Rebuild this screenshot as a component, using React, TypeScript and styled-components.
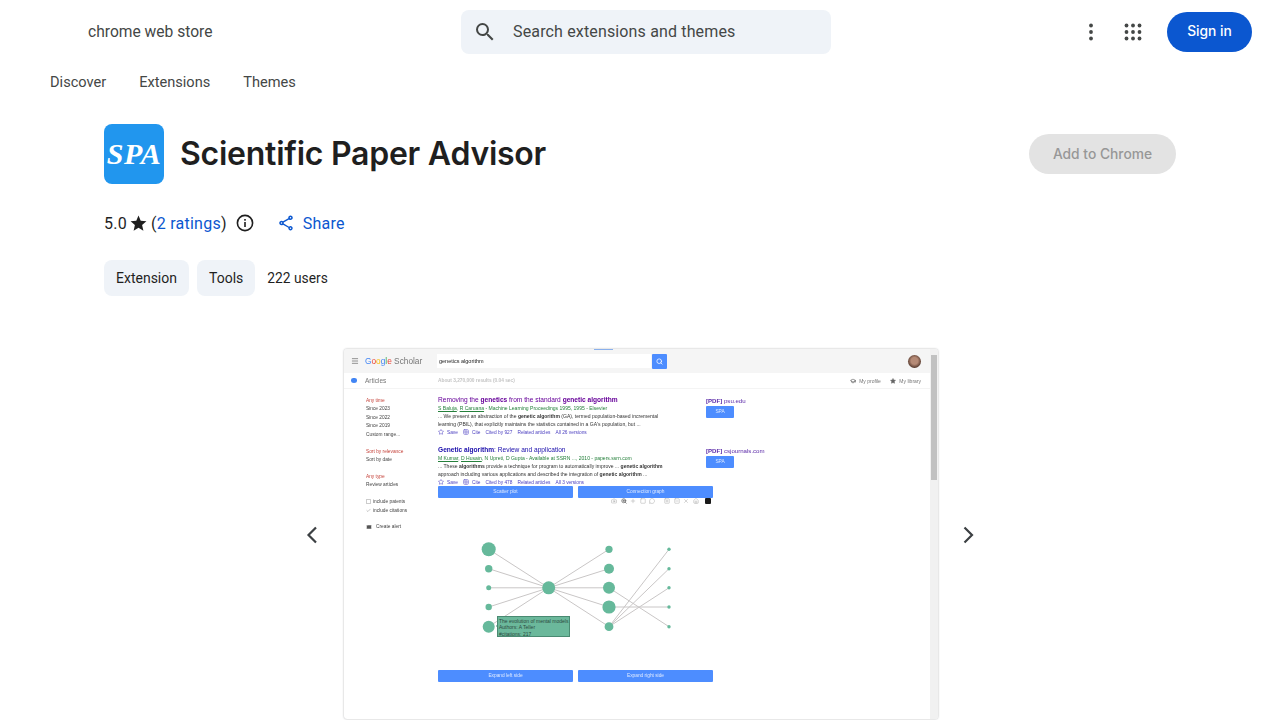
import styled, { createGlobalStyle } from 'styled-components';
import { Camera, ZoomIn, Plus, Square, MessageCircle, SquarePlus, SquareMinus, X, House, Menu, Search, GraduationCap, Star, Mail, Check, Grid2x2 } from 'lucide-react';

const GlobalStyle = createGlobalStyle`
    html, body {
        margin: 0;
        height: 720px;
        overflow: hidden;
        background: #fff;
        font-family: Roboto, "Liberation Sans", sans-serif;
        color: #1f1f1f;
    }
`;

const leftNodes = [
    { y: 549.3, r: 7 },
    { y: 568.7, r: 3.7 },
    { y: 587.8, r: 2.5 },
    { y: 607, r: 3.2 },
    { y: 626.7, r: 6 },
];

const middleNodes = [
    { y: 549.3, r: 3.6 },
    { y: 568.7, r: 5 },
    { y: 587.8, r: 6 },
    { y: 607, r: 6.6 },
    { y: 626.7, r: 4.4 },
];

const rightY = [549.3, 568.7, 587.8, 607, 626.7];

const rightEdges = [
    [4, 0],
    [4, 1],
    [4, 2],
    [3, 3],
    [2, 4],
];

// the graph is drawn in page coordinates, shifted to the top left of its box
const GRAPH_X = 438;
const GRAPH_Y = 525;

const ConnectionGraph = () => (
    <GraphBox>
        <svg width="275" height="145" viewBox={`${GRAPH_X} ${GRAPH_Y} 275 145`}>
            <g stroke="#c9c6c6" strokeWidth="1">
                {leftNodes.map((n) => <line key={n.y} x1="488.7" y1={n.y} x2="548.7" y2="587.8" />)}
                {middleNodes.map((n) => <line key={n.y} x1="548.7" y1="587.8" x2="609" y2={n.y} />)}
                {rightEdges.map(([from, to]) => (
                    <line key={to} x1="609" y1={middleNodes[from].y} x2="669" y2={rightY[to]} />
                ))}
            </g>
            <g fill="#66b99b">
                {leftNodes.map((n) => <circle key={n.y} cx="488.7" cy={n.y} r={n.r} />)}
                <circle cx="548.7" cy="587.8" r="6.5" />
                {middleNodes.map((n) => <circle key={n.y} cx="609" cy={n.y} r={n.r} />)}
                {rightY.map((y) => <circle key={y} cx="669" cy={y} r="1.7" />)}
            </g>
        </svg>
        <GraphTooltip>
            <div>The evolution of mental models</div>
            <div>Authors: A Teller</div>
            <div>#citations: 217</div>
        </GraphTooltip>
    </GraphBox>
);

const Actions = ({ citedBy, versions }: { citedBy: string, versions: string }) => (
    <ResultActions>
        <ActionItem><Star size={6} />Save</ActionItem>
        <ActionItem><Grid2x2 size={6} />Cite</ActionItem>
        <ActionItem>Cited by {citedBy}</ActionItem>
        <ActionItem>Related articles</ActionItem>
        <ActionItem>All {versions} versions</ActionItem>
    </ResultActions>
);

const ScholarShot = () => (
    <Shot>
        <ShotTab />
        <ShotMain>
            <ShotTopBar>
                <Menu size={8} color="#777" strokeWidth={2.4} />
                <ScholarLogo>
                    <b style={{ color: '#4285f4' }}>G</b>
                    <b style={{ color: '#ea4335' }}>o</b>
                    <b style={{ color: '#fbbc05' }}>o</b>
                    <b style={{ color: '#4285f4' }}>g</b>
                    <b style={{ color: '#34a853' }}>l</b>
                    <b style={{ color: '#ea4335' }}>e</b>
                    <span> Scholar</span>
                </ScholarLogo>
                <ShotSearch>genetics algorithm</ShotSearch>
                <ShotSearchButton><Search size={7} color="#fff" strokeWidth={2.6} /></ShotSearchButton>
                <Avatar />
            </ShotTopBar>
            <ShotSubBar>
                <ArticlesLabel>
                    <ArticlesDot />
                    Articles
                </ArticlesLabel>
                <ResultCount>About 3,270,000 results (0.04 sec)</ResultCount>
                <ProfileLinks>
                    <span><GraduationCap size={6} strokeWidth={3} /> My profile</span>
                    <span><Star size={6} fill="#666" /> My library</span>
                </ProfileLinks>
            </ShotSubBar>
            <ShotBody>
                <ShotSidebar>
                    <FilterGroup>
                        <FilterItem $active>Any time</FilterItem>
                        <FilterItem>Since 2023</FilterItem>
                        <FilterItem>Since 2022</FilterItem>
                        <FilterItem>Since 2019</FilterItem>
                        <FilterItem>Custom range...</FilterItem>
                    </FilterGroup>
                    <FilterGroup>
                        <FilterItem $active>Sort by relevance</FilterItem>
                        <FilterItem>Sort by date</FilterItem>
                    </FilterGroup>
                    <FilterGroup>
                        <FilterItem $active>Any type</FilterItem>
                        <FilterItem>Review articles</FilterItem>
                    </FilterGroup>
                    <FilterGroup>
                        <FilterItem><CheckBox />include patents</FilterItem>
                        <FilterItem><CheckBox $checked><Check size={5} color="#777" /></CheckBox>include citations</FilterItem>
                    </FilterGroup>
                    <AlertItem><Mail size={6} fill="#555" color="#fff" />Create alert</AlertItem>
                </ShotSidebar>
                <ShotResults>
                    <Result>
                        <div>
                            <ResultTitle $visited>Removing the <b>genetics</b> from the standard <b>genetic algorithm</b></ResultTitle>
                            <ResultAuthors><u>S Baluja</u>, <u>R Caruana</u> - Machine Learning Proceedings 1995, 1995 - Elsevier</ResultAuthors>
                            <ResultSnippet>... We present an abstraction of the <b>genetic algorithm</b> (GA), termed population-based incremental</ResultSnippet>
                            <ResultSnippet>learning (PBIL), that explicitly maintains the statistics contained in a GA's population, but ...</ResultSnippet>
                            <Actions citedBy="927" versions="26" />
                        </div>
                        <ResultSide>
                            <PdfLink><b>[PDF]</b> psu.edu</PdfLink>
                            <SpaButton>SPA</SpaButton>
                        </ResultSide>
                    </Result>
                    <Result>
                        <div>
                            <ResultTitle><b>Genetic algorithm</b>: Review and application</ResultTitle>
                            <ResultAuthors><u>M Kumar</u>, <u>D Husain</u>, N Upreti, D Gupta - Available at SSRN ..., 2010 - papers.ssrn.com</ResultAuthors>
                            <ResultSnippet>... These <b>algorithms</b> provide a technique for program to automatically improve ... <b>genetic algorithm</b></ResultSnippet>
                            <ResultSnippet>approach including various applications and described the integration of <b>genetic algorithm</b> ...</ResultSnippet>
                            <Actions citedBy="478" versions="3" />
                        </div>
                        <ResultSide>
                            <PdfLink><b>[PDF]</b> csjournals.com</PdfLink>
                            <SpaButton>SPA</SpaButton>
                        </ResultSide>
                    </Result>
                    <WideButtons>
                        <WideButton>Scatter plot</WideButton>
                        <WideButton>Connection graph</WideButton>
                    </WideButtons>
                    <PlotToolbar>
                        <Camera size={6} />
                        <ZoomIn size={6} color="#666" strokeWidth={3} />
                        <Plus size={6} />
                        <Square size={6} />
                        <MessageCircle size={6} />
                        <ToolGap />
                        <SquarePlus size={6} />
                        <SquareMinus size={6} />
                        <X size={6} />
                        <House size={6} />
                        <PlotBadge />
                    </PlotToolbar>
                    <ConnectionGraph />
                    <WideButtons>
                        <WideButton>Expand left side</WideButton>
                        <WideButton>Expand right side</WideButton>
                    </WideButtons>
                </ShotResults>
            </ShotBody>
        </ShotMain>
        <ScrollTrack>
            <ScrollThumb />
        </ScrollTrack>
    </Shot>
);

const App = () => (
    <>
        <GlobalStyle />
        <Header>
            <StoreName>chrome web store</StoreName>
            <SearchBox>
                <svg width="24" height="24" viewBox="0 0 24 24" fill="#444746">
                    <path d="M15.5 14h-.79l-.28-.27A6.471 6.471 0 0 0 16 9.5 6.5 6.5 0 1 0 9.5 16c1.61 0 3.09-.59 4.23-1.57l.27.28v.79l5 4.99L20.49 19l-4.99-5zm-6 0C7.01 14 5 11.99 5 9.5S7.01 5 9.5 5 14 7.01 14 9.5 11.99 14 9.5 14z" />
                </svg>
                <SearchText>Search extensions and themes</SearchText>
            </SearchBox>
            <HeaderActions>
                <IconSlot>
                    <svg width="24" height="24" viewBox="0 0 24 24" fill="#444746">
                        <circle cx="12" cy="5.5" r="1.9" />
                        <circle cx="12" cy="12" r="1.9" />
                        <circle cx="12" cy="18.5" r="1.9" />
                    </svg>
                </IconSlot>
                <IconSlot>
                    <svg width="24" height="24" viewBox="0 0 24 24" fill="#444746">
                        {[5.5, 12, 18.5].map((y) => [5.5, 12, 18.5].map((x) => <circle key={`${x}-${y}`} cx={x} cy={y} r="1.9" />))}
                    </svg>
                </IconSlot>
                <SignIn>Sign in</SignIn>
            </HeaderActions>
        </Header>
        <Nav>
            <NavItem>Discover</NavItem>
            <NavItem>Extensions</NavItem>
            <NavItem>Themes</NavItem>
        </Nav>
        <Content>
            <TitleRow>
                <AppIcon>SPA</AppIcon>
                <Title>Scientific Paper Advisor</Title>
                <AddButton>Add to Chrome</AddButton>
            </TitleRow>
            <RatingRow>
                <span>5.0</span>
                <svg width="19" height="19" viewBox="0 0 24 24" fill="#1f1f1f">
                    <path d="M12 17.27L18.18 21l-1.64-6.97L22 9.24l-7.19-.61L12 2 9.19 8.63 2 9.24l5.46 4.73L5.82 21z" />
                </svg>
                <span>(<RatingLink>2 ratings</RatingLink>)</span>
                <InfoIcon width="20" height="20" viewBox="0 0 20 20">
                    <circle cx="10" cy="10" r="7.6" fill="none" stroke="#1f1f1f" strokeWidth="1.6" />
                    <rect x="9.2" y="9" width="1.6" height="5" fill="#1f1f1f" />
                    <rect x="9.2" y="6" width="1.6" height="1.7" fill="#1f1f1f" />
                </InfoIcon>
                <ShareLink>
                    <svg width="18" height="18" viewBox="0 0 24 24" fill="#0b57d0">
                        <path d="M18 16.08c-.76 0-1.44.3-1.96.77L8.91 12.7c.05-.23.09-.46.09-.7s-.04-.47-.09-.7l7.05-4.11c.54.5 1.25.81 2.04.81 1.66 0 3-1.34 3-3s-1.34-3-3-3-3 1.34-3 3c0 .24.04.47.09.7L8.04 9.81C7.5 9.31 6.79 9 6 9c-1.66 0-3 1.34-3 3s1.34 3 3 3c.79 0 1.5-.31 2.04-.81l7.12 4.16c-.05.21-.08.43-.08.65 0 1.61 1.31 2.92 2.92 2.92s2.92-1.31 2.92-2.92-1.31-2.92-2.92-2.92zM18 4c.55 0 1 .45 1 1s-.45 1-1 1-1-.45-1-1 .45-1 1-1zM6 13c-.55 0-1-.45-1-1s.45-1 1-1 1 .45 1 1-.45 1-1 1zm12 7.02c-.55 0-1-.45-1-1s.45-1 1-1 1 .45 1 1-.45 1-1 1z" />
                    </svg>
                    Share
                </ShareLink>
            </RatingRow>
            <ChipRow>
                <Chip>Extension</Chip>
                <Chip>Tools</Chip>
                <Users>222 users</Users>
            </ChipRow>
            <Carousel>
                <ArrowButton>
                    <svg width="24" height="24" viewBox="0 0 24 24" fill="none" stroke="#3c4043" strokeWidth="2.2">
                        <path d="M16 4.5 8.5 12l7.5 7.5" />
                    </svg>
                </ArrowButton>
                <ScholarShot />
                <ArrowButton>
                    <svg width="24" height="24" viewBox="0 0 24 24" fill="none" stroke="#3c4043" strokeWidth="2.2">
                        <path d="M8.5 4.5 16 12l-7.5 7.5" />
                    </svg>
                </ArrowButton>
            </Carousel>
        </Content>
    </>
);

export default App;

const Header = styled.header`
    display: grid;
    grid-template-columns: 373px 370px 1fr;
    align-items: center;
    height: 64px;
    padding: 0 28px 0 88px;
`

const StoreName = styled.div`
    font-size: 15.6px;
    color: #444746;
`

const SearchBox = styled.div`
    display: flex;
    align-items: center;
    gap: 16px;
    height: 44px;
    padding-left: 12px;
    border-radius: 8px;
    background: #eff3f8;
`

const SearchText = styled.span`
    margin-top: -2px;
    font-size: 16px;
    letter-spacing: 0.15px;
    color: #444746;
`

const HeaderActions = styled.div`
    display: flex;
    align-items: center;
    justify-content: flex-end;
    gap: 18px;
    margin-top: -1px;
`

const IconSlot = styled.div`
    display: flex;
    width: 24px;
    height: 24px;
    &:last-of-type {
        margin-right: 4px;
    }
`

const SignIn = styled.button`
    width: 85px;
    height: 40px;
    padding-bottom: 2px;
    border: 0;
    border-radius: 20px;
    background: #0b57d0;
    color: #fff;
    font: 500 13.8px Inter, Roboto, sans-serif;
`

const Nav = styled.nav`
    display: flex;
    align-items: center;
    gap: 33px;
    height: 36px;
    padding-left: 50px;
`

const NavItem = styled.a`
    font-size: 14.6px;
    color: #444746;
`

const Content = styled.main`
    padding: 24px 104px 0;
`

const TitleRow = styled.div`
    display: flex;
    align-items: center;
    height: 60px;
`

const AppIcon = styled.div`
    display: flex;
    align-items: center;
    justify-content: center;
    width: 60px;
    height: 60px;
    flex: none;
    border-radius: 8px;
    background: #2196ee;
    color: #fff;
    font: italic bold 30px "Liberation Serif", serif;
    letter-spacing: 0.5px;
`

const Title = styled.h1`
    flex: 1;
    margin: -1px 0 0 16px;
    font: 600 32px Inter, Roboto, sans-serif;
    letter-spacing: -0.25px;
    color: #1f1f1f;
`

const AddButton = styled.button`
    width: 147px;
    height: 40px;
    padding-bottom: 1px;
    border: 0;
    border-radius: 20px;
    background: #e3e3e3;
    color: #979797;
    font: 500 13.8px Inter, Roboto, sans-serif;
`

const RatingRow = styled.div`
    display: flex;
    align-items: center;
    height: 24px;
    margin-top: 27px;
    font-size: 16px;
    letter-spacing: 0.25px;
    color: #1f1f1f;

    & > svg:first-of-type {
        margin: 0 3px 0 2px;
    }
`

const RatingLink = styled.a`
    color: #0b57d0;
`

const InfoIcon = styled.svg`
    margin-left: 8px;
`

const ShareLink = styled.a`
    display: flex;
    align-items: center;
    gap: 8px;
    margin-left: 22px;
    color: #0b57d0;
`

const ChipRow = styled.div`
    display: flex;
    align-items: center;
    gap: 8px;
    margin-top: 25px;
`

const Chip = styled.span`
    display: flex;
    align-items: center;
    height: 36px;
    padding: 0 12px;
    border-radius: 8px;
    background: #eff3f8;
    font-size: 14px;
    color: #1f1f1f;
`

const Users = styled.span`
    margin-left: 4px;
    font-size: 13.8px;
    color: #1f1f1f;
`

const Carousel = styled.div`
    display: flex;
    align-items: center;
    justify-content: center;
    gap: 19px;
    margin-top: 53px;
`

const ArrowButton = styled.div`
    display: flex;
    width: 24px;
    height: 24px;
    flex: none;
    margin-top: 1px;
`

const Shot = styled.div`
    position: relative;
    display: flex;
    width: 594px;
    height: 370px;
    flex: none;
    margin: 0 -1px 0 1px;
    overflow: hidden;
    border-radius: 3px;
    background: #fff;
    box-shadow: 0 0 2px rgba(60, 64, 67, 0.45);
    font-family: "Liberation Sans", Arial, sans-serif;
    filter: blur(0.35px);
`

const ShotTab = styled.div`
    position: absolute;
    top: 0;
    left: 250px;
    width: 19px;
    height: 1px;
    background: #8ab0ec;
`

const ShotMain = styled.div`
    flex: 1;
    min-width: 0;
`

const ShotTopBar = styled.div`
    display: flex;
    align-items: center;
    height: 24px;
    padding: 0 9px 0 7px;
    background: #f5f5f5;
`

const ScholarLogo = styled.div`
    width: 72px;
    margin-left: 6px;
    font-size: 8.3px;
    color: #777;

    b {
        font-weight: 400;
    }
`

const ShotSearch = styled.div`
    display: flex;
    align-items: center;
    width: 212px;
    height: 14px;
    padding-left: 2px;
    background: #fff;
    font-size: 5.5px;
    color: #222;
`

const ShotSearchButton = styled.div`
    display: flex;
    align-items: center;
    justify-content: center;
    width: 15px;
    height: 15px;
    margin-left: 1px;
    background: #4d8dff;
    border-radius: 1px;
`

const Avatar = styled.div`
    width: 13px;
    height: 13px;
    margin-left: auto;
    border-radius: 50%;
    background: radial-gradient(circle at 50% 45%, #b58a76 0 35%, #5a3c30 70%);
`

const ShotSubBar = styled.div`
    display: flex;
    align-items: center;
    height: 16px;
    padding: 0 9px 0 7px;
    border-bottom: 1px solid #f4f4f4;
    box-sizing: border-box;
`

const ArticlesLabel = styled.div`
    display: flex;
    align-items: center;
    gap: 8px;
    width: 87px;
    font-size: 6.5px;
    color: #777;
`

const ArticlesDot = styled.span`
    width: 6px;
    height: 5px;
    border-radius: 40% 40% 50% 50%;
    background: #4285f4;
`

const ResultCount = styled.div`
    font-size: 4.8px;
    font-weight: bold;
    color: #c4c4c4;
`

const ProfileLinks = styled.div`
    display: flex;
    gap: 9px;
    margin-left: auto;
    font-size: 5px;
    color: #777;

    span {
        display: flex;
        align-items: center;
        gap: 3.5px;
    }
`

const ShotBody = styled.div`
    display: flex;
`

const ShotSidebar = styled.aside`
    display: flex;
    flex-direction: column;
    gap: 8.3px;
    width: 72px;
    padding: 7px 0 0 22px;
`

const FilterGroup = styled.div`
    display: flex;
    flex-direction: column;
`

const FilterItem = styled.div<{ $active?: boolean }>`
    display: flex;
    align-items: center;
    height: 8.5px;
    font-size: 4.8px;
    color: ${(props) => (props.$active ? '#c5423a' : '#444')};
`

const CheckBox = styled.span<{ $checked?: boolean }>`
    display: flex;
    width: 5px;
    height: 5px;
    margin-right: 2px;
    box-sizing: border-box;
    border: ${(props) => (props.$checked ? '0' : '0.5px solid #ccc')};
`

const AlertItem = styled.div`
    display: flex;
    align-items: center;
    gap: 4px;
    height: 8px;
    font-size: 4.8px;
    color: #444;
`

const ShotResults = styled.section`
    width: 275px;
    padding-top: 7px;
    font-size: 5.05px;
`

const Result = styled.article`
    display: grid;
    grid-template-columns: 268px 120px;
    height: 40px;
    white-space: nowrap;

    &:first-child {
        margin-bottom: 10px;
    }
`

const ResultTitle = styled.div<{ $visited?: boolean }>`
    height: 8px;
    line-height: 8px;
    font-size: 6.6px;
    color: ${(props) => (props.$visited ? '#609' : '#1a0dab')};
`

const ResultAuthors = styled.div`
    height: 8px;
    line-height: 8px;
    color: #26803c;
`

const ResultSnippet = styled.div`
    height: 8px;
    line-height: 8px;
    color: #333;
`

const ResultActions = styled.div`
    display: flex;
    align-items: center;
    gap: 5px;
    height: 8px;
    font-size: 4.8px;
    color: #4b3fc0;
`

const ActionItem = styled.span`
    display: flex;
    align-items: center;
    gap: 3px;
`

const ResultSide = styled.div`
    display: flex;
    flex-direction: column;
    align-items: flex-start;
`

const PdfLink = styled.div`
    height: 10px;
    line-height: 10px;
    font-size: 6.1px;
    color: #5b2aa8;
`

const SpaButton = styled.div`
    width: 28px;
    height: 11.5px;
    line-height: 11.5px;
    text-align: center;
    font-size: 4.8px;
    color: #dfeaff;
    background: #4d8dff;
    border-radius: 1px;
`

const WideButtons = styled.div`
    display: grid;
    grid-template-columns: 135px 135px;
    gap: 5px;
`

const WideButton = styled.div`
    height: 11.5px;
    line-height: 11.5px;
    text-align: center;
    font-size: 4.8px;
    color: #dfeaff;
    background: #4d8dff;
    border-radius: 1px;
`

const PlotToolbar = styled.div`
    display: flex;
    align-items: center;
    justify-content: flex-end;
    gap: 3.5px;
    height: 7.5px;
    padding-right: 2px;
    color: #aaa;
`

const ToolGap = styled.span`
    width: 2px;
`

const PlotBadge = styled.span`
    width: 6px;
    height: 6px;
    margin-left: 3px;
    border-radius: 1px;
    background: #1a1a1a;
`

const GraphBox = styled.div`
    position: relative;
    box-sizing: border-box;
    height: 165px;
    padding-top: 20px;

    svg {
        display: block;
    }
`

const GraphTooltip = styled.div`
    position: absolute;
    left: 59px;
    top: 111px;
    width: 72.5px;
    height: 21px;
    box-sizing: border-box;
    padding: 0.5px 1px;
    border: 0.6px solid #4a8a72;
    background: #6bb89b;
    font-size: 5px;
    line-height: 6.5px;
    white-space: nowrap;
    color: #2c4a3e;

    &::before {
        content: '';
        position: absolute;
        left: -2.5px;
        top: 7px;
        border-style: solid;
        border-width: 2px 2.5px 2px 0;
        border-color: transparent #4a8a72 transparent transparent;
    }
`

const ScrollTrack = styled.div`
    display: flex;
    width: 8px;
    flex: none;
    padding-top: 6px;
    box-sizing: border-box;
    background: #f1f1f1;
`

const ScrollThumb = styled.div`
    width: 6px;
    height: 125px;
    margin-left: 1px;
    background: #c1c1c1;
`
